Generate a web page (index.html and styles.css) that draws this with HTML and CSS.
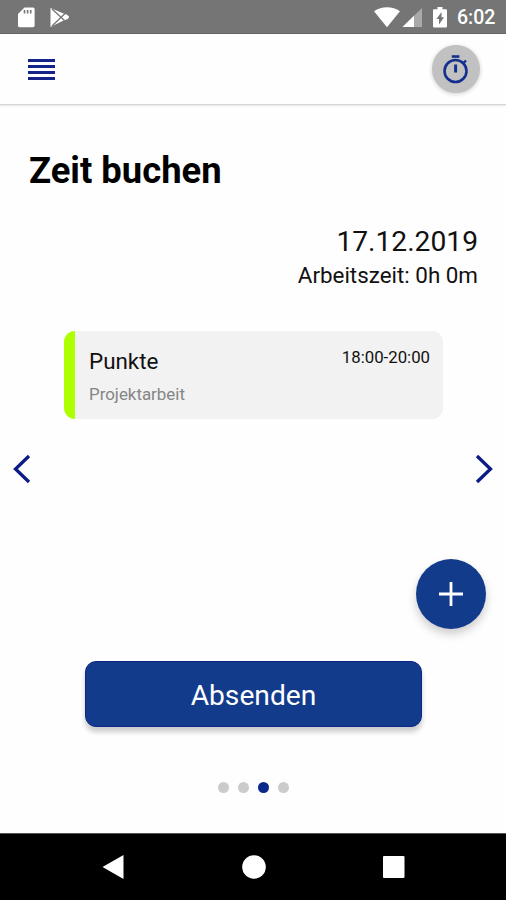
FILE: index.html
```html
<!DOCTYPE html>
<html lang="de">
<head>
    <meta charset="UTF-8">
    <meta name="viewport" content="width=device-width, initial-scale=1.0">
    <title>Zeit buchen</title>
    <link rel="stylesheet" href="styles.css">
</head>
<body>
    <div class="status-bar">
        <svg class="status-left" width="54" height="34" viewBox="0 0 54 34">
            <path fill="#fff" d="M6.500 7.500H15a1.600 1.600 0 0 1 1.600 1.600v16.500a1.600 1.600 0 0 1-1.600 1.600H1.600A1.600 1.600 0 0 1 0 25.600V14z"/>
            <path stroke="#757575" stroke-width="1.600" d="M6.500 10v3.500M9.600 10v3.500M12.700 10v3.500"/>
            <path fill="#fff" d="M32.500 8 45.500 13.500q5.500 1.500 5.500 3.500t-5.500 3.500L32.500 27z"/>
            <path fill="none" stroke="#757575" stroke-width="1.300" d="M34 9l12.500 11.500M34 26l13-12.500"/>
        </svg>
        <svg class="status-right" width="76" height="34" viewBox="0 0 76 34">
            <path fill="#fff" d="M0 11.300C7.500 6 18.500 6 26 11.300L13 27.300z"/>
            <path fill="#a9a9a9" d="M48 8V27H28.500z"/>
            <path fill="#fff" d="M40 15.800V27H28.500z"/>
            <path fill="#fff" d="M63.500 7h5v2.200h3.300a1.200 1.200 0 0 1 1.200 1.200v15.900a1.200 1.200 0 0 1-1.200 1.200H60.200a1.200 1.200 0 0 1-1.200-1.200V10.400a1.200 1.200 0 0 1 1.200-1.200h3.300z"/>
            <path fill="#757575" d="M67.500 12v5.200H70L65 24.500v-5.500h-2.600z"/>
        </svg>
        <span class="clock">6:02</span>
    </div>

    <header class="header">
        <svg class="menu" width="27" height="22" viewBox="0 0 27 22">
            <path stroke="#14258a" stroke-width="3" d="M0 2.500h27M0 8.500h27M0 14.500h27M0 20.500h27"/>
        </svg>
        <div class="timer">
            <svg width="48" height="48" viewBox="0 0 48 48" fill="none" stroke="#14308f">
                <circle cx="23.500" cy="26" r="11" stroke-width="2.600"/>
                <path stroke-width="2.600" d="M19.800 11.500h7.600"/>
                <path stroke-width="3" d="M23.600 19.500v8"/>
                <path stroke-width="2.400" d="M31 18.500l3-3"/>
            </svg>
        </div>
    </header>

    <main class="main">
        <h1>Zeit buchen</h1>
        <div class="summary">
            <p class="date">17.12.2019</p>
            <p class="worktime">Arbeitszeit: 0h 0m</p>
        </div>

        <div class="entry">
            <div class="entry-text">
                <p class="entry-title">Punkte</p>
                <p class="entry-type">Projektarbeit</p>
            </div>
            <span class="entry-time">18:00-20:00</span>
        </div>

        <div class="arrows">
            <svg width="18" height="30" viewBox="0 0 18 30"><path d="M16 2 2.500 15 16 28"/></svg>
            <svg width="18" height="30" viewBox="0 0 18 30"><path d="M2 2l13.500 13L2 28"/></svg>
        </div>

        <div class="add">
            <svg width="24" height="24" viewBox="0 0 24 24"><path stroke="#fff" stroke-width="2.800" d="M12 0v24M0 12h24"/></svg>
        </div>

        <div class="submit">Absenden</div>

        <div class="dots">
            <span class="dot"></span>
            <span class="dot"></span>
            <span class="dot active"></span>
            <span class="dot"></span>
        </div>
    </main>

    <nav class="nav-bar">
        <svg width="22" height="25" viewBox="0 0 22 25"><path fill="#fff" d="M21.500 0v24L.5 12z"/></svg>
        <svg width="24" height="24" viewBox="0 0 24 24"><circle cx="12" cy="12" r="11.800" fill="#fff"/></svg>
        <svg width="22" height="22" viewBox="0 0 22 22"><rect width="21.500" height="22" rx="1" fill="#fff"/></svg>
    </nav>
</body>
</html>
```
FILE: styles.css
```css
* {
    margin: 0;
    padding: 0;
    box-sizing: border-box;
}

body {
    display: flex;
    flex-direction: column;
    height: 900px;
    background: #fefefe;
    color: #111;
    font-family: Roboto, sans-serif;
    overflow: hidden;
}

svg {
    display: block;
}

.status-bar {
    display: flex;
    align-items: center;
    height: 34px;
    padding: 0 11px 0 18px;
    background: #757575;
    border-bottom: 1px solid #666;
}

.status-right {
    margin-left: auto;
}

.clock {
    width: 38px;
    margin-left: 7px;
    color: #fff;
    font-size: 19.5px;
    font-weight: 500;
    line-height: 34px;
    padding-top: 2px;
    white-space: nowrap;
}

.header {
    display: flex;
    justify-content: space-between;
    align-items: center;
    height: 71px;
    padding: 0 26px 0 28px;
    border-bottom: 1px solid #d4d4d4;
    box-shadow: 0 1px 2px rgba(0, 0, 0, 0.1);
}

.timer {
    width: 48px;
    height: 48px;
    border-radius: 50%;
    background: #c1c1c1;
    box-shadow: 0 1px 4px rgba(0, 0, 0, 0.2);
}

.main {
    display: flex;
    flex-direction: column;
    flex: 1;
}

h1 {
    margin: 45px 0 0 29px;
    color: #000;
    font-size: 36.4px;
    font-weight: 700;
    line-height: 42px;
}

.summary {
    margin: 33px 28px 0 0;
    text-align: right;
}

.date {
    font-size: 28.2px;
    line-height: 34px;
}

.worktime {
    font-size: 22.4px;
    line-height: 32px;
}

/* Booked entry */
.entry {
    display: flex;
    justify-content: space-between;
    width: 379px;
    height: 88px;
    margin: 40px 0 0 64px;
    padding: 14px 13px 0 14px;
    border-left: 11px solid #aeff00;
    border-radius: 11px;
    background: #f2f2f2;
}

.entry-title {
    font-size: 22.4px;
    line-height: 32px;
}

.entry-type {
    margin-top: 5px;
    color: #858585;
    font-size: 16.9px;
    line-height: 24px;
}

.entry-time {
    font-size: 16.8px;
    line-height: 25px;
}

.arrows {
    display: flex;
    justify-content: space-between;
    margin-top: 35px;
    padding: 0 13px;
}

.arrows path {
    fill: none;
    stroke: #0b1c84;
    stroke-width: 3.3;
}

.add {
    display: flex;
    justify-content: center;
    align-items: center;
    width: 70px;
    height: 70px;
    margin: 75px 20.5px 0 auto;
    border-radius: 50%;
    background: #133b8c;
    box-shadow: 0 5px 10px rgba(0, 0, 0, 0.2);
}

.submit {
    width: 337px;
    height: 66px;
    margin: 32px 0 0 85px;
    border: 1px solid #0c2588;
    border-radius: 11px;
    background: #133b8c;
    box-shadow: 0 5px 5px rgba(0, 0, 0, 0.2);
    color: #fff;
    font-size: 28.2px;
    line-height: 67px;
    text-align: center;
}

.dots {
    display: flex;
    justify-content: center;
    gap: 9px;
    margin-top: 55px;
}

.dot {
    width: 11px;
    height: 11px;
    border-radius: 50%;
    background: #cbcbcb;
}

.dot.active {
    background: #08288a;
}

.nav-bar {
    display: flex;
    justify-content: space-between;
    align-items: center;
    height: 67px;
    padding: 0 101px 0 102px;
    border-top: 1px solid #555;
    background: #000;
}
```
